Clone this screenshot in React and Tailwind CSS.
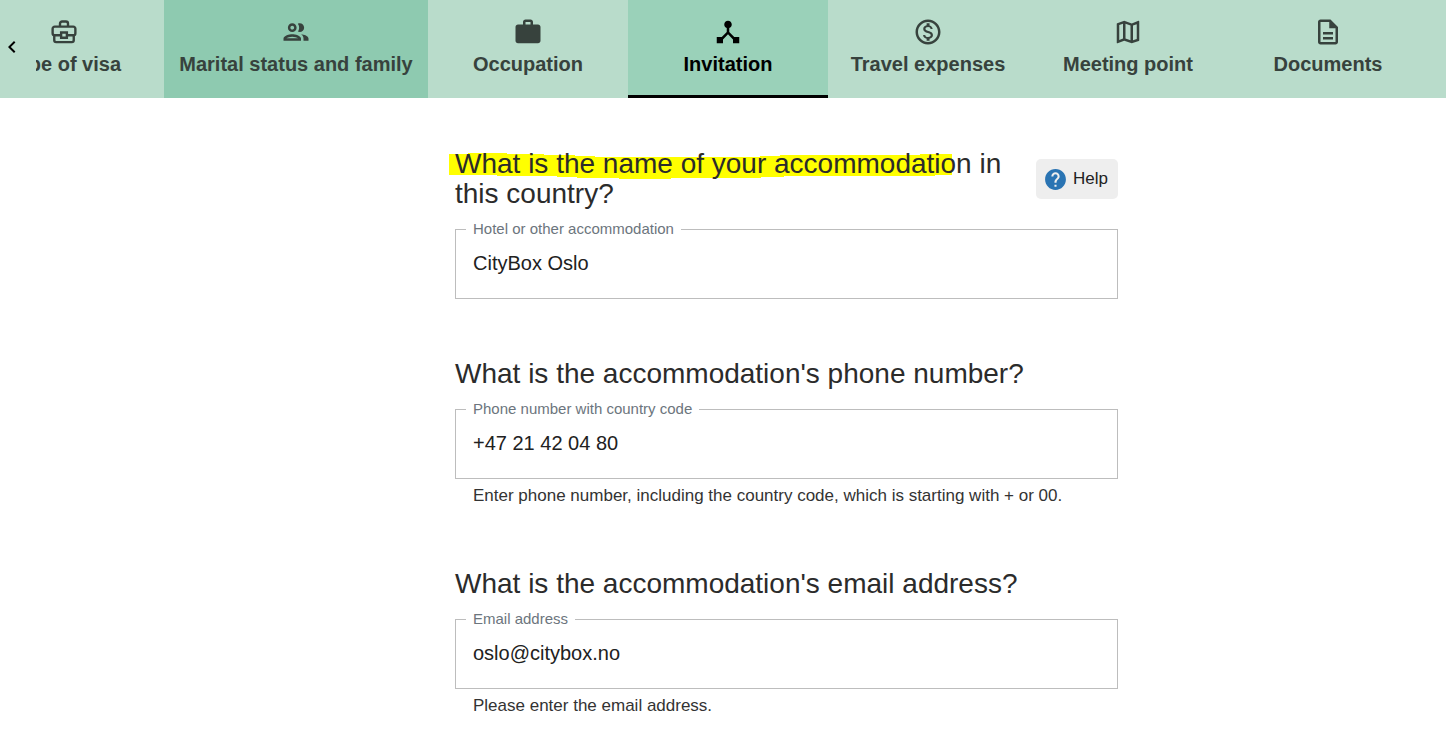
import { useState } from 'react'
import {
    MdOutlinePeople,
    MdWork,
    MdDeviceHub,
    MdOutlineMonetizationOn,
    MdOutlineMap,
    MdOutlineDescription,
    MdHelp,
    MdKeyboardArrowLeft,
} from 'react-icons/md'

function VisaCase({ size }) {
    return (
        <svg width={size} height={size} viewBox="0 0 24 24" fill="none" stroke="currentColor" strokeWidth="1.9" aria-hidden="true">
            <path d="M8.8 7.6V5.3a1.7 1.7 0 0 1 1.7-1.7h3a1.7 1.7 0 0 1 1.7 1.7v2.3" />
            <path d="M9.6 14.6H4.6a1.7 1.7 0 0 1-1.7-1.7V9.4a1.7 1.7 0 0 1 1.7-1.7h14.8a1.7 1.7 0 0 1 1.7 1.7v3.5a1.7 1.7 0 0 1-1.7 1.7h-5" />
            <path d="M4.2 14.6v4a1.5 1.5 0 0 0 1.5 1.5h12.6a1.5 1.5 0 0 0 1.5-1.5v-4" />
            <path d="M9.7 12.4h4.6v4.2H9.7z" />
        </svg>
    )
}

const TABS = [
    { id: 'visa', label: 'Type of visa', Icon: VisaCase },
    { id: 'family', label: 'Marital status and family', Icon: MdOutlinePeople, visited: true },
    { id: 'occupation', label: 'Occupation', Icon: MdWork },
    { id: 'invitation', label: 'Invitation', Icon: MdDeviceHub },
    { id: 'expenses', label: 'Travel expenses', Icon: MdOutlineMonetizationOn },
    { id: 'meeting', label: 'Meeting point', Icon: MdOutlineMap },
    { id: 'documents', label: 'Documents', Icon: MdOutlineDescription },
]

function tabStyle(tab, active) {
    if (tab.id === active) return 'min-w-[200px] bg-[#9ad1b9] text-black border-black'
    if (tab.visited) return 'min-w-[264px] bg-[#8ecab0] text-[#37423d] border-transparent'
    return 'min-w-[200px] text-[#37423d] border-transparent'
}

function StepTabs() {
    const [active, setActive] = useState('invitation')

    return (
        <nav className="flex h-[98px] bg-[#b9dccb]">
            <button type="button" aria-label="Previous steps" className="flex w-9 shrink-0 items-center pb-1">
                <MdKeyboardArrowLeft size={24} />
            </button>
            <div className="flex-1 overflow-hidden">
                {/* strip is scrolled so that the first tab is partly hidden */}
                <div role="tablist" className="-ml-[72px] flex h-full">
                    {TABS.map((tab) => (
                        <button
                            key={tab.id}
                            type="button"
                            role="tab"
                            aria-selected={tab.id === active}
                            onClick={() => setActive(tab.id)}
                            className={`flex shrink-0 flex-col items-center gap-[5px] border-b-[3px] px-3 pt-[17px] text-[20px] leading-6 font-bold whitespace-nowrap ${tabStyle(tab, active)}`}
                        >
                            <tab.Icon size={30} />
                            {tab.label}
                        </button>
                    ))}
                </div>
            </div>
        </nav>
    )
}

function Field({ id, type = 'text', label, value, helper }) {
    return (
        <>
            <fieldset className="h-[79px] border border-[#bdbdbd] px-[10px]">
                <legend className="px-[7px] text-[15px] leading-[18px] text-[#6c757d]">
                    <label htmlFor={id}>{label}</label>
                </legend>
                <input
                    id={id}
                    type={type}
                    defaultValue={value}
                    className="block h-[50px] w-full px-[7px] text-[20px] text-[#212121] outline-none"
                />
            </fieldset>
            {helper && <p className="mt-[5px] px-[18px] text-[17px] leading-6 text-[#333]">{helper}</p>}
        </>
    )
}

// Uneven felt-tip stroke behind the first question
function Marker() {
    return (
        <svg className="absolute -top-px -left-[6px] -z-10" width="503" height="32" viewBox="0 0 503 32" fill="#ffff00" aria-hidden="true">
            <path d="M0 6h19V5h39v1h37v1h31v1h20v1h165V8h20V7h140V6h32v21h-17v1H335v1h-23v1h-90v1h-52v-1h-42v-1h-20v-1H48v-1H0z" />
        </svg>
    )
}

export default function App() {
    return (
        <div className="bg-white font-['Liberation_Sans',Arial,sans-serif]">
            <StepTabs />
            <main className="mx-auto max-w-[790px] pt-[51px] pl-[127px]">
                <section className="pb-[60px]">
                    <div className="flex items-start justify-between">
                        <h2 className="relative isolate mb-[11px] max-w-[560px] text-[28px] leading-[30px] text-[#2b2b2b]">
                            <Marker />
                            What is the name of your accommodation in this country?
                        </h2>
                        <button
                            type="button"
                            className="mt-[10px] flex h-10 items-center gap-[5px] rounded-[5px] bg-[#eee] pr-[10px] pl-[7px] text-[17px] text-[#212121]"
                        >
                            <MdHelp size={25} className="text-[#2a74b3]" />
                            Help
                        </button>
                    </div>
                    <Field id="hotel" label="Hotel or other accommodation" value="CityBox Oslo" />
                </section>
                <section className="pb-[61px]">
                    <h2 className="mb-[11px] text-[28px] leading-[30px] text-[#2b2b2b]">What is the accommodation's phone number?</h2>
                    <Field
                        id="phone"
                        type="tel"
                        label="Phone number with country code"
                        value="+47 21 42 04 80"
                        helper="Enter phone number, including the country code, which is starting with + or 00."
                    />
                </section>
                <section>
                    <h2 className="mb-[11px] text-[28px] leading-[30px] text-[#2b2b2b]">What is the accommodation's email address?</h2>
                    <Field
                        id="email"
                        type="email"
                        label="Email address"
                        value="oslo@citybox.no"
                        helper="Please enter the email address."
                    />
                </section>
            </main>
        </div>
    )
}
